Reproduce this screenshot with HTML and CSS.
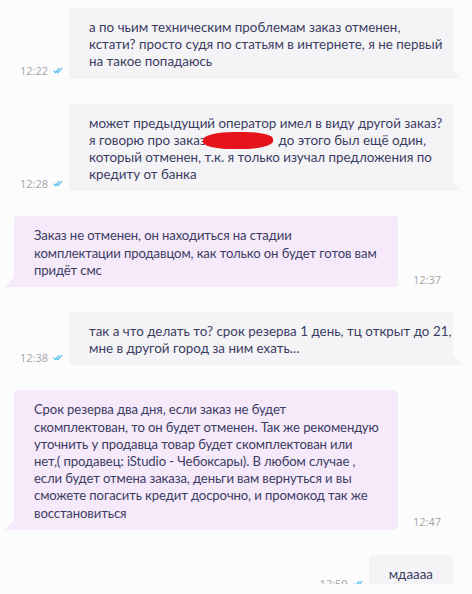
FILE: index.html
```html
<!DOCTYPE html>
<html lang="ru">
<head>
  <meta charset="UTF-8" />
  <title>Чат</title>
  <link rel="stylesheet" href="styles.css">
</head>
<body>
  <div class="chat">
    <div class="row out">
      <div class="meta"><span class="time">12:22</span><svg class="check" width="10" height="7" viewBox="0 0 10 7"><path d="M0.6 3.6 L2.4 5.6 L6.4 1.2 M3.8 4.6 L4.8 5.6 L9.2 1.2" fill="none" stroke="#4dbde8" stroke-width="1.2"/></svg></div>
      <div class="bubble">а по чьим техническим проблемам заказ отменен,<br>кстати? просто судя по статьям в интернете, я не первый<br>на такое попадаюсь</div>
    </div>

    <div class="row out">
      <div class="meta"><span class="time">12:28</span><svg class="check" width="10" height="7" viewBox="0 0 10 7"><path d="M0.6 3.6 L2.4 5.6 L6.4 1.2 M3.8 4.6 L4.8 5.6 L9.2 1.2" fill="none" stroke="#4dbde8" stroke-width="1.2"/></svg></div>
      <div class="bubble">может предыдущий оператор имел в виду другой заказ?<br>я говорю про заказ:<span class="redact"></span> до этого был ещё один,<br>который отменен, т.к. я только изучал предложения по<br>кредиту от банка</div>
    </div>

    <div class="row in">
      <div class="bubble">Заказ не отменен, он находиться на стадии<br>комплектации продавцом, как только он будет готов вам<br>придёт смс</div>
      <div class="meta"><span class="time">12:37</span></div>
    </div>

    <div class="row out">
      <div class="meta"><span class="time">12:38</span><svg class="check" width="10" height="7" viewBox="0 0 10 7"><path d="M0.6 3.6 L2.4 5.6 L6.4 1.2 M3.8 4.6 L4.8 5.6 L9.2 1.2" fill="none" stroke="#4dbde8" stroke-width="1.2"/></svg></div>
      <div class="bubble">так а что делать то? срок резерва 1 день, тц открыт до 21,<br>мне в другой город за ним ехать...</div>
    </div>

    <div class="row in">
      <div class="bubble">Срок резерва два дня, если заказ не будет<br>скомплектован, то он будет отменен. Так же рекомендую<br>уточнить у продавца товар будет скомплектован или<br>нет,( продавец: iStudio - Чебоксары). В любом случае ,<br>если будет отмена заказа, деньги вам вернуться и вы<br>сможете погасить кредит досрочно, и промокод так же<br>восстановиться</div>
      <div class="meta"><span class="time">12:47</span></div>
    </div>

    <div class="row out">
      <div class="meta"><span class="time">12:50</span><svg class="check" width="10" height="7" viewBox="0 0 10 7"><path d="M0.6 3.6 L2.4 5.6 L6.4 1.2 M3.8 4.6 L4.8 5.6 L9.2 1.2" fill="none" stroke="#4dbde8" stroke-width="1.2"/></svg></div>
      <div class="bubble short">мдаааа</div>
    </div>
  </div>
</body>
</html>
```

FILE: styles.css
```css
body {
  margin: 0;
  background: #fcfcfd;
  font-family: Lato, "Open Sans", sans-serif;
  color: #3b3c62;
}
.chat {
  height: 584px;
  overflow: hidden;
  padding: 8px 19px 0 14px;
  box-sizing: border-box;
  display: flex;
  flex-direction: column;
  gap: 25px;
}
.row {
  display: flex;
  align-items: flex-end;
}
.row.out {
  justify-content: flex-end;
}
.bubble {
  position: relative;
  width: 384px;
  box-sizing: border-box;
  padding: 11px 20px 8px;
  font-size: 13.4px;
  line-height: 17.2px;
  white-space: nowrap;
}
.bubble.short {
  width: auto;
}
.out .bubble {
  background: #f4f4f6;
  border-radius: 4px 4px 0 4px;
}
.out .bubble::after {
  content: "";
  position: absolute;
  right: -9px;
  bottom: 0;
  border-left: 9px solid #f4f4f6;
  border-top: 10px solid transparent;
}
.in .bubble {
  background: #f5e9fa;
  border-radius: 4px 4px 4px 0;
  font-size: 13.1px;
  letter-spacing: -0.1px;
}
.in .bubble::after {
  content: "";
  position: absolute;
  left: -9px;
  bottom: 0;
  border-right: 9px solid #f5e9fa;
  border-top: 10px solid transparent;
}
.meta {
  display: flex;
  align-items: center;
  gap: 5px;
  margin-bottom: 1px;
  height: 14px;
}
.out .meta {
  margin-right: 6px;
}
.in .meta {
  margin-left: 15px;
}
.time {
  font-family: "Open Sans", sans-serif;
  font-size: 11px;
  color: #a4a4a8;
}
.redact {
  display: inline-block;
  width: 70px;
  height: 17px;
  margin-left: -6px;
  margin-right: 2px;
  vertical-align: -4px;
  background: #e5141b;
  border-radius: 45% 40% 45% 40%;
}
```
